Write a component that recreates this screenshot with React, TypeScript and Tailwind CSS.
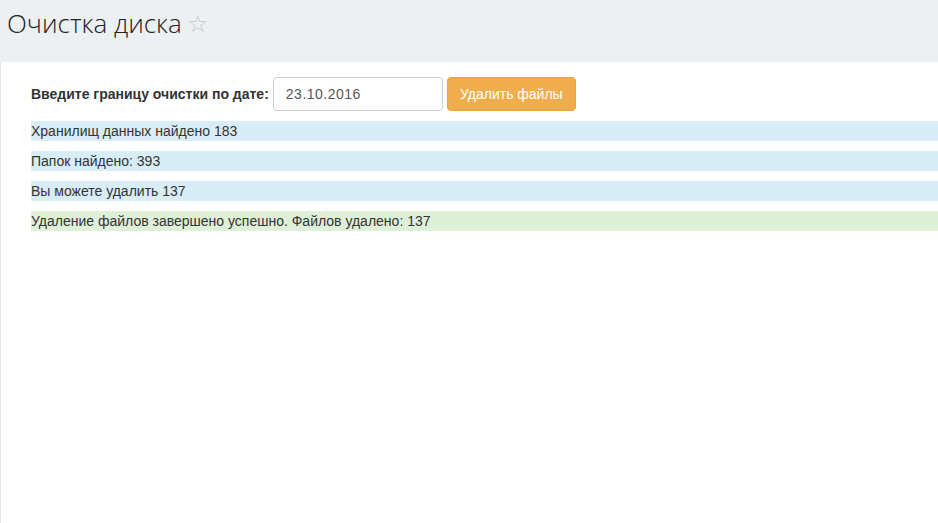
export default function App() {
  const info = ["Хранилищ данных найдено 183", "Папок найдено: 393", "Вы можете удалить 137"];

  return (
    <div className="min-h-[523px] flex flex-col bg-white" style={{ fontFamily: '"Liberation Sans", Arial, sans-serif' }}>
      <div className="h-[62px] bg-[#ecf0f3] pl-[7px] pt-[4px]">
        <h1 className="text-[26px] leading-[38px] font-light text-[#222] flex items-center" style={{ fontFamily: '"Open Sans", sans-serif' }}>
          Очистка диска
          <span className="ml-[5px] text-[24px] text-[#c4c7ca]">☆</span>
        </h1>
      </div>
      <div className="flex-1 border-l border-[#e3e7ea] pl-[30px] pt-[15px]">
        <div className="flex items-center h-[34px]">
          <span className="text-[14px] font-bold text-[#333]">Введите границу очистки по дате:</span>
          <input
            defaultValue="23.10.2016"
            className="ml-[4px] w-[170px] h-[34px] border border-[#ccc] rounded-[4px] px-[12px] text-[14px] text-[#555] tracking-[0.5px] outline-none"
          />
          <button className="ml-[4px] w-[129px] h-[34px] rounded-[4px] bg-[#f0ad4e] border border-[#eea236] text-white text-[14px]">
            Удалить файлы
          </button>
        </div>
        <div className="mt-[10px] flex flex-col gap-[10px]">
          {info.map((t) => (
            <div key={t} className="h-[20px] leading-[20px] bg-[#d9edf7] text-[14px] text-[#333]">
              {t}
            </div>
          ))}
          <div className="h-[20px] leading-[20px] bg-[#dff0d8] text-[14px] text-[#333]">
            Удаление файлов завершено успешно. Файлов удалено: 137
          </div>
        </div>
      </div>
    </div>
  );
}
